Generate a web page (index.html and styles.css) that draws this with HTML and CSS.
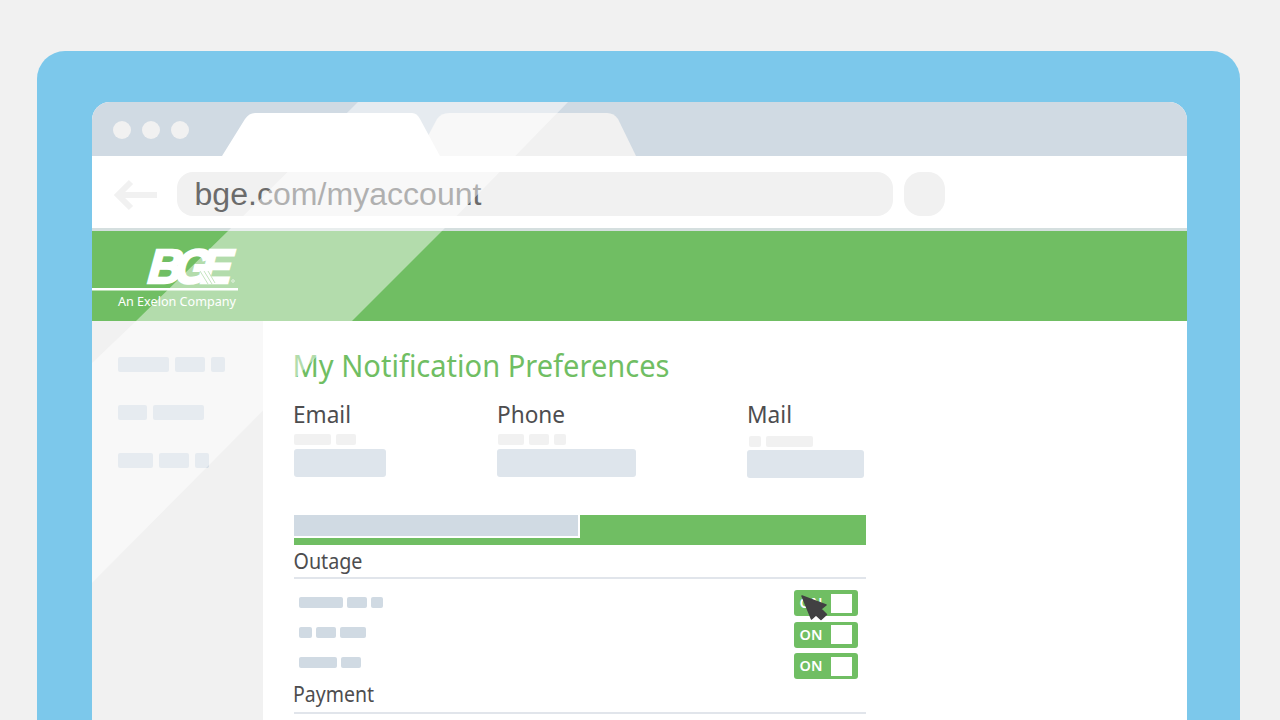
FILE: index.html
```
<!DOCTYPE html>
<html lang="en">
<head>
  <meta charset="UTF-8">
  <meta name="viewport" content="width=device-width, initial-scale=1.0">
  <title>My Notification Preferences</title>
  <link rel="stylesheet" href="styles.css">
</head>
<body>
  <div class="laptop">
    <div class="browser">
      <div class="tabbar">
        <div class="dots"><i></i><i></i><i></i></div>
        <svg class="tabs" width="416" height="44" viewBox="0 0 416 44">
          <path d="M206 24 L215 7 Q219 1 227 1 H385 Q392 1 396 7 L414 44 H206 Z" fill="#f1f1f1"/>
          <path d="M0 44 L23 7 Q27 1 33 1 H190 Q195 1 198 7 L218 44 Z" fill="#fff"/>
        </svg>
      </div>

      <div class="toolbar">
        <svg class="back" width="43" height="34" viewBox="0 0 43 34">
          <path d="M17 4 L4 17 L17 30 M5 17 H43" fill="none" stroke="#f1f1f1" stroke-width="6"/>
        </svg>
        <div class="address"><svg width="320" height="43"><text x="17.500" y="33" textLength="287" lengthAdjust="spacingAndGlyphs">bge.com/myaccount</text></svg></div>
        <div class="menu"></div>
      </div>

      <header class="banner">
        <svg class="logo" width="160" height="89" viewBox="0 0 160 89">
          <g transform="translate(54 51.500) skewX(-15)" class="bge">
            <text x="-1" y="0" textLength="34" lengthAdjust="spacingAndGlyphs">B</text>
            <text x="26" y="0" textLength="35" lengthAdjust="spacingAndGlyphs">G</text>
            <text x="52" y="0" textLength="31" lengthAdjust="spacingAndGlyphs">E</text>
          </g>
          <path d="M103 33 H136 L134.500 39 H102 Z" fill="#fff"/>
          <path d="M108 40 L116 53 M112 40 L120 53 M116 40 L123 52" stroke="#92cd87" stroke-width="1"/>
          <circle cx="141" cy="50" r="1.300" fill="none" stroke="#fff" stroke-width=".6"/>
          <rect x="0" y="57" width="146" height="2.500" fill="#fff"/>
          <text class="tagline" x="26" y="75" textLength="118" lengthAdjust="spacingAndGlyphs">An Exelon Company</text>
        </svg>
      </header>

      <div class="page">
        <aside class="sidebar">
          <div class="bars"><i class="w51"></i><i class="w30"></i><i class="w15"></i></div>
          <div class="bars"><i class="w29"></i><i class="w51"></i></div>
          <div class="bars"><i class="w35"></i><i class="w30"></i><i class="w15"></i></div>
        </aside>

        <main class="content">
          <h1><svg width="400" height="44"><text x="-1.500" y="32" textLength="377" lengthAdjust="spacingAndGlyphs">My Notification Preferences</text></svg></h1>

          <div class="contacts">
            <div class="contact email">
              <h2><svg width="90" height="30"><text x="-1" y="22.500" textLength="58" lengthAdjust="spacingAndGlyphs">Email</text></svg></h2>
              <div class="bars pale"><i class="w38"></i><i class="w20"></i></div>
              <div class="field"></div>
            </div>
            <div class="contact phone">
              <h2><svg width="90" height="30"><text x="-1" y="22.500" textLength="68" lengthAdjust="spacingAndGlyphs">Phone</text></svg></h2>
              <div class="bars pale"><i class="w26"></i><i class="w20"></i><i class="w13"></i></div>
              <div class="field"></div>
            </div>
            <div class="contact mail">
              <h2><svg width="90" height="30"><text x="-1" y="22.500" textLength="45" lengthAdjust="spacingAndGlyphs">Mail</text></svg></h2>
              <div class="bars pale"><i class="w13"></i><i class="w47"></i></div>
              <div class="field"></div>
            </div>
          </div>

          <div class="progress"><div class="active"></div></div>

          <h3><svg width="120" height="31"><text x="-.5" y="24" textLength="69" lengthAdjust="spacingAndGlyphs">Outage</text></svg></h3>
          <div class="options">
            <div class="labels">
              <div class="bars"><i class="w44"></i><i class="w20"></i><i class="w13"></i></div>
              <div class="bars"><i class="w13"></i><i class="w20"></i><i class="w27"></i></div>
              <div class="bars"><i class="w38"></i><i class="w20"></i></div>
            </div>
            <div class="toggles">
              <div class="toggle">
                <span>ON</span><b></b>
                <svg class="cursor" width="28" height="28" viewBox="0 0 28 28">
                  <path d="M1 1 L25 10 L20 14 L25.500 19.500 L20 24.500 L15 20 L10.500 24 Z" fill="#414042" stroke="#414042" stroke-width="1.500" stroke-linejoin="round"/>
                </svg>
              </div>
              <div class="toggle"><span>ON</span><b></b></div>
              <div class="toggle"><span>ON</span><b></b></div>
            </div>
          </div>
          <h3><svg width="120" height="31"><text x="-1" y="22" textLength="81" lengthAdjust="spacingAndGlyphs">Payment</text></svg></h3>
        </main>
      </div>

      <!-- screen reflection -->
      <svg class="glare" width="480" height="484" viewBox="0 0 480 484">
        <path d="M266 0 H476 L350 129 L260 219 L0 481 V261 L44 219 L136 129 Z" fill="#fff" fill-opacity=".47"/>
      </svg>
    </div>
  </div>
</body>
</html>
```
FILE: styles.css
```
* {
  box-sizing: border-box;
}

body {
  margin: 0;
  padding: 51px 40px 0 37px;
  height: 720px;
  overflow: hidden;
  background: #f1f1f1;
  font-family: "Noto Sans", "Open Sans", sans-serif;
  color: #4d4d4f;
}

svg {
  display: block;
  overflow: visible;
}

.laptop {
  height: 669px;
  padding: 51px 53.500px 0 55px;
  background: #7cc8eb;
  border-radius: 28px 28px 0 0;
}

.browser {
  position: relative;
  height: 618px;
  background: #fff;
  border-radius: 18px 18px 0 0;
  overflow: hidden;
}

/* window chrome */
.tabbar {
  display: flex;
  height: 54px;
  padding-left: 20.500px;
  background: #d0dae3;
}

.dots {
  display: flex;
  gap: 11px;
  width: 109.500px;
  padding-top: 19px;
}

.dots i {
  width: 18px;
  height: 18px;
  border-radius: 50%;
  background: #f1f1f1;
}

.tabs {
  margin-top: 10px;
}

.toolbar {
  display: flex;
  height: 75px;
  padding: 16px 0 0 22px;
  border-bottom: 3px solid #d5dfdf;
}

.back {
  margin: 6px 20px 0 0;
}

.address {
  width: 716px;
  height: 44px;
  margin-right: 11px;
  border-radius: 16px;
  background: #f1f1f1;
}

.address text {
  font: 31px "Liberation Sans", sans-serif;
  fill: #6b6b6b;
}

.menu {
  width: 41px;
  height: 44px;
  border-radius: 17px;
  background: #f1f1f1;
}

.banner {
  height: 90px;
  background: #70be63;
}

.bge text {
  font: bold 48px "Liberation Sans", sans-serif;
  fill: #fff;
  stroke: #fff;
  stroke-width: 2.5px;
}

.tagline {
  font-size: 13px;
  fill: #fff;
}

/* placeholder text */
.bars {
  display: flex;
}

.bars i {
  height: 11px;
  border-radius: 2px;
  background: #d0dae3;
}

.pale i {
  background: #f1f1f1;
}

.w13 { width: 12.500px; }
.w15 { width: 14.500px; }
.w20 { width: 20px; }
.w26 { width: 26px; }
.w27 { width: 26.500px; }
.w29 { width: 29px; }
.w30 { width: 29.500px; }
.w35 { width: 35px; }
.w38 { width: 37.500px; }
.w44 { width: 43.500px; }
.w47 { width: 47px; }
.w51 { width: 51px; }

.page {
  display: flex;
  height: 399px;
}

.sidebar {
  display: flex;
  flex-direction: column;
  gap: 33px;
  width: 171px;
  padding: 36px 0 0 26px;
  background: #f1f1f1;
}

.sidebar .bars {
  gap: 6px;
}

.sidebar .bars i {
  height: 15px;
}

.content {
  width: 603px;
  padding: 24px 0 0 30.500px;
}

h1, h2, h3 {
  margin: 0;
  font-weight: 400;
}

h1 text {
  font-size: 30px;
  fill: #70be63;
}

h1 {
  height: 55px;
}

h2 text {
  font-size: 24px;
  fill: #4d4d4f;
}

h3 text {
  font-size: 22.500px;
  fill: #4d4d4f;
}

.contacts {
  display: flex;
  height: 115px;
}

.email { width: 204px; }
.phone { width: 250px; }

.contact .bars {
  gap: 5px;
  margin: 4px 0;
}

.field {
  width: 92px;
  height: 28px;
  border-radius: 3px;
  background: #dee5ec;
}

.phone .field {
  width: 139px;
  margin-left: -1px;
}

.mail .field {
  width: 117px;
  margin-left: -1px;
}

.mail .bars {
  margin: 6px 0 3px 1px;
}

.progress {
  height: 30px;
  background: #70be63;
}

.active {
  width: 286px;
  height: 23px;
  background: #d0dae3;
  border: solid #fff;
  border-width: 0 2px 2px 0;
}

h3 {
  height: 34px;
  border-bottom: 2px solid #e1e5eb;
}

.options {
  display: flex;
  justify-content: space-between;
  height: 101px;
  padding: 11px 8.500px 0 5.500px;
}

.labels {
  display: flex;
  flex-direction: column;
  gap: 19px;
  padding-top: 7px;
}

.labels .bars {
  gap: 4px;
}

.toggles {
  display: flex;
  flex-direction: column;
  gap: 5.500px;
}

.toggle {
  position: relative;
  display: flex;
  align-items: center;
  justify-content: space-between;
  width: 63.500px;
  height: 26px;
  padding: 0 6px 0 5.500px;
  border-radius: 3px;
  background: #70be63;
  color: #fff;
  font-size: 14.500px;
  font-weight: 600;
}

.toggle span {
  padding-bottom: 2px;
}

.toggle b {
  width: 21px;
  height: 19px;
  background: #fff;
}

.cursor {
  position: absolute;
  left: 7px;
  top: 5px;
}

.glare {
  position: absolute;
  left: 0;
  top: 0;
}
```
